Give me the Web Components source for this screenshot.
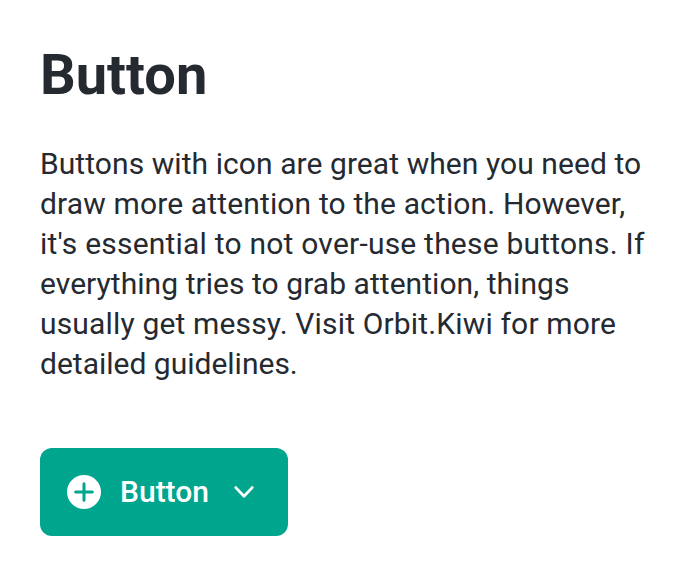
<!DOCTYPE html>
<html lang="en"><head><meta charset="utf-8"><title>Button</title>
<style>body{margin:0;background:#fff}</style></head>
<body>
<doc-section>
<doc-heading slot="title">Button</doc-heading>
<doc-text>
<text-line style="--track:.07px">Buttons with icon are great when you need to</text-line>
<text-line style="--track:.14px">draw more attention to the action. However,</text-line>
<text-line style="--track:.21px">it's essential to not over-use these buttons. If</text-line>
<text-line style="--track:.05px">everything tries to grab attention, things</text-line>
<text-line style="--track:.16px">usually get messy. Visit Orbit.Kiwi for more</text-line>
<text-line>detailed guidelines.</text-line>
</doc-text>
<orbit-button slot="action"><icon-plus-circle slot="left"></icon-plus-circle>Button<icon-chevron-down slot="right"></icon-chevron-down></orbit-button>
</doc-section>
<script>
function define(name, html){
  customElements.define(name, class extends HTMLElement{
    constructor(){ super(); this.attachShadow({mode:'open'}).innerHTML = html; }
  });
}
define('doc-section', `<style>:host{display:flex;flex-direction:column;align-items:flex-start;box-sizing:border-box;height:576px;padding:40px;font-family:Roboto,sans-serif;color:#252a31}</style><slot name="title"></slot><slot></slot><slot name="action"></slot>`);
define('doc-heading', `<style>:host{display:block}h1{margin:0;font-size:56px;line-height:70px;font-weight:700}</style><h1><slot></slot></h1>`);
define('doc-text', `<style>:host{display:block;margin-top:34px;font-size:30px;line-height:40px}</style><slot></slot>`);
define('text-line', `<style>:host{display:block;white-space:nowrap;letter-spacing:var(--track,0)}</style><slot></slot>`);
define('orbit-button', `<style>:host{display:block;margin-top:64px}button{display:flex;align-items:center;box-sizing:border-box;width:248px;height:88px;padding:0 24px;border:0;border-radius:12px;background:#00a58e;color:#fff;font:500 30px/40px Roboto,sans-serif}span{width:88px;margin:0 16px;white-space:nowrap;text-align:left}</style><button type="button"><slot name="left"></slot><span><slot></slot></span><slot name="right"></slot></button>`);
define('icon-plus-circle', `<style>:host,svg{display:block;width:40px;height:40px}:host{flex:none}</style><svg viewBox="0 0 40 40"><circle cx="20" cy="20" r="17" fill="#fff"/><path d="M20 11.7v16.6M11.7 20h16.6" stroke="#00a58e" stroke-width="3" stroke-linecap="round"/></svg>`);
define('icon-chevron-down', `<style>:host,svg{display:block;width:40px;height:40px}:host{flex:none}</style><svg viewBox="0 0 40 40"><path d="M11.8 15.6l8.2 8.6 8.2-8.6" fill="none" stroke="#fff" stroke-width="2.8" stroke-linecap="round" stroke-linejoin="round"/></svg>`);
</script>
</body></html>
